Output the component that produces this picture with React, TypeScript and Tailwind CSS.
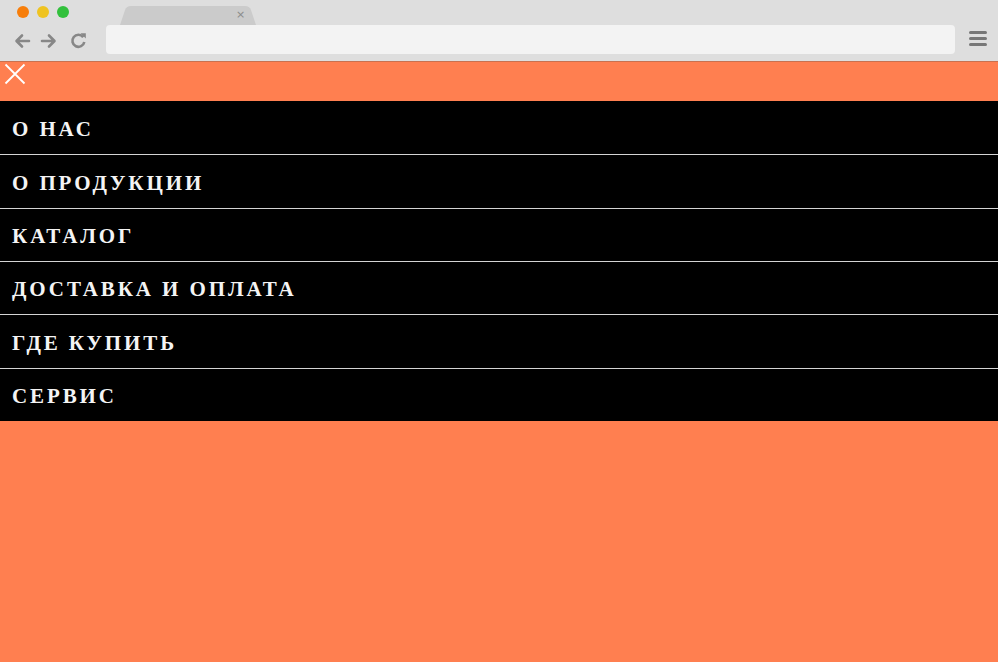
const items = [
  "О нас",
  "О продукции",
  "Каталог",
  "Доставка и оплата",
  "Где купить",
  "Сервис",
];

function BrowserChrome() {
  return (
    <div className="relative h-[61px] bg-[#dedede]">
      <div className="absolute left-[17px] top-[6px] flex gap-[8px]">
        <span className="block h-[12px] w-[12px] rounded-full bg-[#f77e0a]" />
        <span className="block h-[12px] w-[12px] rounded-full bg-[#efc321]" />
        <span className="block h-[12px] w-[12px] rounded-full bg-[#32c03c]" />
      </div>
      {/* tab */}
      <div className="absolute left-[120px] top-[6px] h-[19px] w-[136px]">
        <svg width="136" height="19" viewBox="0 0 136 19" className="absolute inset-0">
          <path d="M0 19 L5 4 Q6.5 0 11 0 L125 0 Q129.5 0 131 4 L136 19 Z" fill="#cbcbcb" />
        </svg>
        <span className="absolute left-[116px] top-[3px] text-[11px] leading-none text-[#8a8a8a] [font-family:'DejaVu_Sans',sans-serif]">
          ×
        </span>
      </div>
      <div className="absolute left-[14px] top-[32px] flex items-center">
        <svg width="17" height="16" viewBox="0 0 17 16" fill="none" stroke="#878787" strokeWidth="2.6" strokeLinecap="round" strokeLinejoin="round">
          <path d="M15 8H3M8 2.5L2.5 8L8 13.5" />
        </svg>
        <svg width="17" height="16" viewBox="0 0 17 16" fill="none" stroke="#878787" strokeWidth="2.6" strokeLinecap="round" strokeLinejoin="round" className="ml-[9px]">
          <path d="M2 8H14M9 2.5L14.5 8L9 13.5" />
        </svg>
        <svg width="17" height="17" viewBox="0 0 17 17" fill="none" className="ml-[13px]">
          <path d="M13.2 5.2A6 6 0 1 0 14.3 10" stroke="#878787" strokeWidth="2.6" strokeLinecap="butt" />
          <path d="M10.5 1.2L15.8 1.2L15.8 6.6Z" fill="#878787" />
        </svg>
      </div>
      <div className="absolute left-[106px] top-[25px] h-[29px] w-[849px] rounded-[4px] bg-[#f3f3f3]" />
      <div className="absolute left-[969px] top-[31px] flex w-[18px] flex-col gap-[3px]">
        <span className="block h-[3px] rounded-full bg-[#777]" />
        <span className="block h-[3px] rounded-full bg-[#777]" />
        <span className="block h-[3px] rounded-full bg-[#777]" />
      </div>
    </div>
  );
}

export default function App() {
  return (
    <div className="flex h-[662px] w-[998px] flex-col overflow-hidden bg-[#ff7f50]">
      <BrowserChrome />
      <div className="h-[40px] border-t border-[#c9714f] pl-[4px] pt-[1px]">
        {/* close button */}
        <svg width="22" height="22" viewBox="0 0 22 22" fill="none" stroke="#ffffff" strokeWidth="1.8">
          <path d="M1.5 1.5L20.5 20.5M20.5 1.5L1.5 20.5" />
        </svg>
      </div>
      <ul className="bg-black">
        {items.map((label, i) => (
          <li
            key={label}
            className={
              "box-border flex h-[53.33px] items-center pl-[12px] pt-[4px] text-[21px] font-bold uppercase tracking-[2.9px] text-[#f4f4f4] [font-family:'Liberation_Serif',serif] " +
              (i > 0 ? "border-t border-[#d4d4d4]" : "")
            }
          >
            {label}
          </li>
        ))}
      </ul>
    </div>
  );
}
